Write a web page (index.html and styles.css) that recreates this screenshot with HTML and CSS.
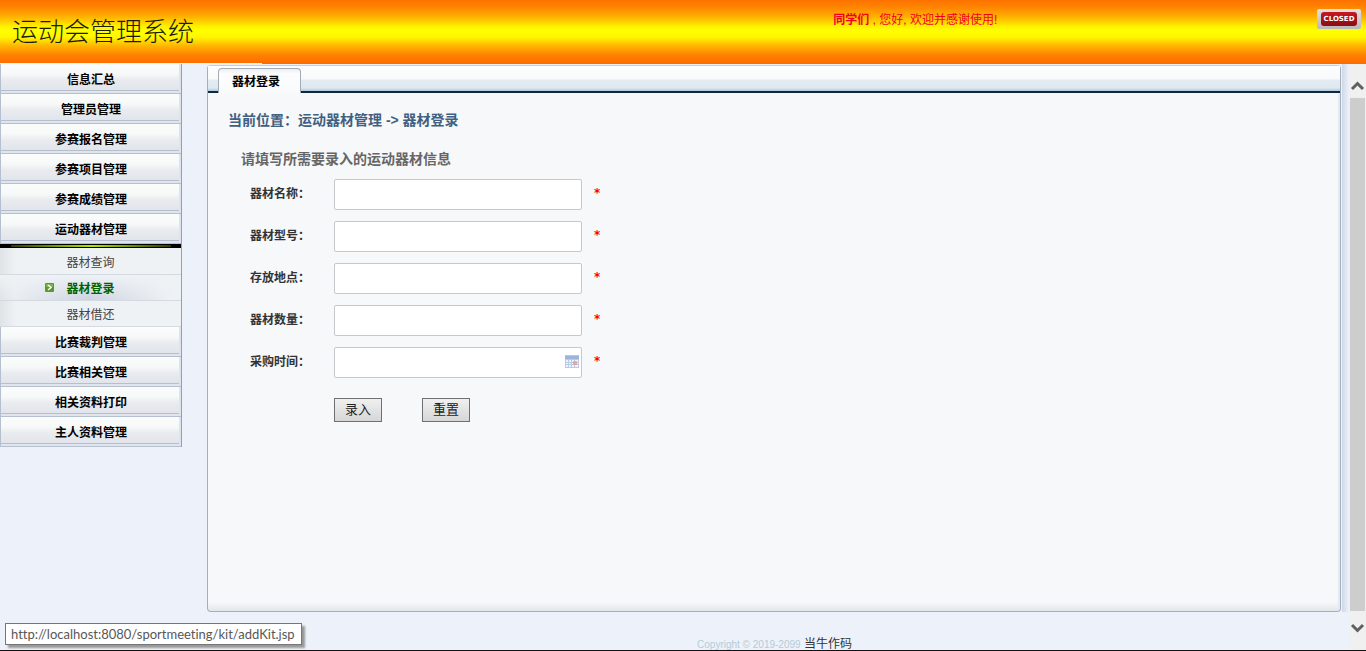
FILE: index.html
```html
<!DOCTYPE html>
<html lang="zh-CN">
<head>
<meta charset="UTF-8">
<meta name="viewport" content="width=device-width, initial-scale=1.0">
<title>运动会管理系统</title>
<link rel="stylesheet" href="styles.css">
</head>
<body>
<header class="top">
    <h1 class="logo">运动会管理系统</h1>
    <p class="welcome"><b>同学们</b> , 您好, 欢迎并感谢使用!</p>
    <button type="button" class="btn-close">
        <svg width="46" height="20" viewBox="0 0 46 20">
            <defs>
                <linearGradient id="plate" x1="0" y1="0" x2="0" y2="1"><stop offset="0" stop-color="#e2e0e0"/><stop offset="1" stop-color="#b9b7b7"/></linearGradient>
                <linearGradient id="red" x1="0" y1="0" x2="0" y2="1"><stop offset="0" stop-color="#c81820"/><stop offset="1" stop-color="#8a0c14"/></linearGradient>
            </defs>
            <rect x="0" y="0" width="44" height="20" rx="2" fill="url(#plate)"/>
            <rect x="4" y="3" width="36" height="14" rx="3" fill="url(#red)"/>
            <text x="22" y="12" class="closed-text">CLOSED</text>
        </svg>
    </button>
</header>

<div class="page">
    <nav class="sidebar">
        <ul class="menu">
            <li><a class="menu-item" href="#">信息汇总</a></li>
            <li><a class="menu-item" href="#">管理员管理</a></li>
            <li><a class="menu-item" href="#">参赛报名管理</a></li>
            <li><a class="menu-item" href="#">参赛项目管理</a></li>
            <li><a class="menu-item" href="#">参赛成绩管理</a></li>
            <li>
                <a class="menu-item" href="#">运动器材管理</a>
                <ul class="submenu">
                    <li><a class="sub-item" href="#">器材查询</a></li>
                    <li><a class="sub-item active" href="#">
                        <svg class="arrow" width="9" height="9" viewBox="0 0 9 9"><rect width="9" height="9" rx="1" fill="#579a2b"/><rect x="1" y="1" width="7" height="3" fill="#79b84a"/><path d="M3 2l3 2.500L3 7" fill="none" stroke="#fff" stroke-width="1.500"/></svg>
                        器材登录</a></li>
                    <li><a class="sub-item" href="#">器材借还</a></li>
                </ul>
            </li>
            <li><a class="menu-item" href="#">比赛裁判管理</a></li>
            <li><a class="menu-item" href="#">比赛相关管理</a></li>
            <li><a class="menu-item" href="#">相关资料打印</a></li>
            <li><a class="menu-item" href="#">主人资料管理</a></li>
        </ul>
    </nav>

    <div class="content">
        <div class="panel-wrap">
            <main class="panel">
                <div class="tabs"><a class="tab" href="#">器材登录</a></div>
                <div class="panel-body">
                    <h2 class="location">当前位置：运动器材管理 -&gt; 器材登录</h2>
                    <form class="kit-form">
                        <h3 class="form-title">请填写所需要录入的运动器材信息</h3>
                        <div class="form-group">
                            <label for="name">器材名称：</label>
                            <input type="text" id="name" name="name">
                            <span class="required">*</span>
                        </div>
                        <div class="form-group">
                            <label for="type">器材型号：</label>
                            <input type="text" id="type" name="type">
                            <span class="required">*</span>
                        </div>
                        <div class="form-group">
                            <label for="place">存放地点：</label>
                            <input type="text" id="place" name="place">
                            <span class="required">*</span>
                        </div>
                        <div class="form-group">
                            <label for="amount">器材数量：</label>
                            <input type="text" id="amount" name="amount">
                            <span class="required">*</span>
                        </div>
                        <div class="form-group">
                            <label for="buyTime">采购时间：</label>
                            <div class="date-box">
                                <input type="text" id="buyTime" name="buyTime">
                                <svg class="calendar" width="14" height="13" viewBox="0 0 14 13">
                                    <rect width="14" height="13" fill="#b9cbe6"/>
                                    <rect width="14" height="1" fill="#c4c4c4"/>
                                    <rect y="1" width="14" height="3" fill="#9db5dc"/>
                                    <path d="M1 5h2v2H1zM4 5h2v2H4zM7 5h2v2H7zM10 5h3v2h-3zM1 8h2v1H1zM4 8h2v1H4zM7 8h2v1H7zM10 8h3v1h-3zM1 10h2v2H1zM4 10h2v2H4zM7 10h2v2H7zM10 10h3v2h-3z" fill="#eef3fb"/>
                                    <rect x="8" y="6" width="4" height="4" rx="1" fill="#efa58f"/>
                                </svg>
                            </div>
                            <span class="required">*</span>
                        </div>
                        <div class="buttons">
                            <button type="submit" class="btn">录入</button>
                            <button type="reset" class="btn">重置</button>
                        </div>
                    </form>
                </div>
            </main>
        </div>
        <footer class="footer"><span class="copyright">Copyright © 2019-2099</span> 当牛作码</footer>
    </div>

    <div class="scrollbar">
        <svg width="17" height="34" viewBox="0 0 17 34"><path d="M3 25l5.500-5.500L14 25" fill="none" stroke="#606060" stroke-width="3"/></svg>
        <div class="thumb"></div>
        <svg width="17" height="39" viewBox="0 0 17 39"><path d="M3 14l5.500 5.500L14 14" fill="none" stroke="#606060" stroke-width="3"/></svg>
    </div>
</div>

<div class="status">http://localhost:8080/sportmeeting/kit/addKit.jsp</div>
</body>
</html>
```
FILE: styles.css
```css
* {
    box-sizing: border-box;
}
body {
    display: flex;
    flex-direction: column;
    height: 100vh;
    margin: 0;
    overflow: hidden;
    font-family: "Liberation Sans", "Noto Sans CJK SC", sans-serif;
    font-size: 12px;
    color: #333;
    background-color: #edf1fa;
    border-bottom: 1px solid #111;
}
h1, h2, h3, p, ul {
    margin: 0;
    padding: 0;
}
ul {
    list-style: none;
}
a {
    color: inherit;
    text-decoration: none;
}

/* header */
.top {
    display: grid;
    grid-template-columns: 61% 1fr auto;
    align-items: start;
    flex: none;
    height: 64px;
    background:
        linear-gradient(#fff0e0, #fff0e0) left bottom / 262px 1px no-repeat,
        linear-gradient(#ff7200, #ff8600 12%, #ffb800 28%, #ffef00 41%, #ff0 48%, #fff600 58%, #ffb400 72%, #ff8200 86%, #ff6a00);
}
.logo {
    padding-left: 12px;
    font-family: "AR PL UKai CN", KaiTi, "Noto Sans CJK SC", serif;
    font-size: 26px;
    font-weight: 300;
    line-height: 60px;
    color: #1c1c00;
}
.welcome {
    padding-top: 10px;
    line-height: 20px;
    color: #f00020;
}
.btn-close {
    margin: 9px 3px 0 0;
    padding: 0;
    border: none;
    background: none;
    cursor: pointer;
}
.btn-close svg {
    display: block;
}
.closed-text {
    font-family: "DejaVu Sans", sans-serif;
    font-size: 7px;
    font-weight: bold;
    text-anchor: middle;
    fill: #fff;
}

.page {
    display: flex;
    flex: 1;
    min-height: 0;
}

/* left menu */
.sidebar {
    flex: none;
    width: 207px;
}
.menu {
    width: 182px;
    border-right: 1px solid #8fa1b3;
    text-align: center;
}
.menu-item {
    display: block;
    height: 30px;
    border: solid #b4c0cf;
    border-width: 0 0 1px 1px;
    background:
        linear-gradient(#b4c0cf, #b4c0cf) 0 26px / 100% 1px no-repeat,
        linear-gradient(#fbfcfc, #f7f8f8 10px, #e9ebef 16px, #e1e5eb 26px, #e1e6ec 30px);
    box-shadow: inset -2px 0 #dde4ed;
    line-height: 32px;
    font-weight: bold;
    color: #000;
}
.submenu {
    padding-top: 5px;
    background:
        linear-gradient(90deg, #2c3c00, #b4e800 50%, #2c3c00) center 1px / 160px 2px no-repeat,
        linear-gradient(#000, #000) 0 0 / 100% 4px no-repeat,
        linear-gradient(90deg, #e0e3e6, #eff2f5 16px);
}
.sub-item {
    display: block;
    position: relative;
    height: 26px;
    border-bottom: 1px solid #d4dae2;
    line-height: 28px;
    color: #444;
}
.sub-item.active {
    background: linear-gradient(#eff2f5, #eff2f500), linear-gradient(90deg, #eff2f500, #ccd2e0 50%, #eff2f500 95%);
    font-weight: bold;
    color: #006400;
}
.arrow {
    position: absolute;
    left: 45px;
    top: 8px;
}

/* content */
.content {
    display: flex;
    flex: 1;
    flex-direction: column;
}
.panel-wrap {
    display: flex;
    flex: 1;
    padding: 1px 8px 0 0;
    background: linear-gradient(90deg, #d0d7e6, #edf1fa) right / 7px 100% no-repeat;
}
.panel {
    flex: 1;
    border: 1px solid #9fb0c0;
    border-top-color: #c3d0dc;
    border-radius: 4px;
    background: linear-gradient(#f7f8fa00 calc(100% - 9px), #e3e7ea) #f7f8fa;
    box-shadow: inset -2px 0 #e3eaf2;
}
.tabs {
    display: flex;
    height: 27px;
    padding: 2px 10px 0;
    border-bottom: 2px solid #10283e;
    background: linear-gradient(#fdfefe, #f7fafb 13px, #e4ebf2 14px, #dfe8f0 22px, #aec8dc 25px);
}
.tab {
    height: 25px;
    padding: 0 20px 0 13px;
    border: 1px solid #a3abb5;
    border-bottom: none;
    border-radius: 4px 4px 0 0;
    background: linear-gradient(#eceef2, #fdfdfe 5px, #f9fafc);
    line-height: 26px;
    font-weight: bold;
    color: #000;
}
.panel-body {
    padding: 16px 20px;
}
.location {
    font-size: 14px;
    line-height: 22px;
    color: #3f6080;
}

/* form */
.kit-form {
    padding: 17px 13px;
}
.form-title {
    margin-bottom: 9px;
    font-size: 14px;
    line-height: 22px;
    color: #666;
}
.form-group {
    display: grid;
    grid-template-columns: 84px 248px 1fr;
    margin: 0 0 11px 9px;
}
.form-group label {
    line-height: 31px;
    font-weight: bold;
}
.form-group input {
    display: block;
    width: 100%;
    height: 31px;
    padding: 5px;
    border: 1px solid #c8c8cc;
    border-radius: 2px;
    background-color: #fff;
}
.date-box {
    position: relative;
}
.calendar {
    position: absolute;
    right: 3px;
    top: 8px;
}
.required {
    padding-left: 12px;
    font-family: "DejaVu Sans", sans-serif;
    font-weight: bold;
    line-height: 28px;
    color: #f00;
}
.buttons {
    display: flex;
    gap: 40px;
    padding: 9px 0 0 93px;
}
.btn {
    height: 24px;
    padding: 0 10px;
    border: 1px solid #707070;
    background: linear-gradient(#f0f0f0, #d6d6d6);
    font-family: inherit;
    font-size: 13px;
    line-height: 22px;
    color: #222;
}

.footer {
    height: 38px;
    padding: 24px 7px 0 0;
    line-height: 16px;
    text-align: center;
}
.copyright {
    font-size: 10px;
    color: #b4ccd6;
}

.scrollbar {
    display: flex;
    flex: none;
    flex-direction: column;
    width: 17px;
    background-color: #f0f0f0;
}
.thumb {
    flex: 1;
    margin: 0 1px;
    background-color: #cdcdcd;
}

/* link address at the bottom of the window */
.status {
    position: absolute;
    left: 5px;
    bottom: 6px;
    padding: 0 6px 0 5px;
    border: 1px solid #767676;
    background-color: #fff;
    box-shadow: 3px 3px 2px #999;
    font-family: Lato, sans-serif;
    font-size: 13px;
    font-variant-ligatures: none;
    line-height: 20px;
    color: #575757;
}
```
